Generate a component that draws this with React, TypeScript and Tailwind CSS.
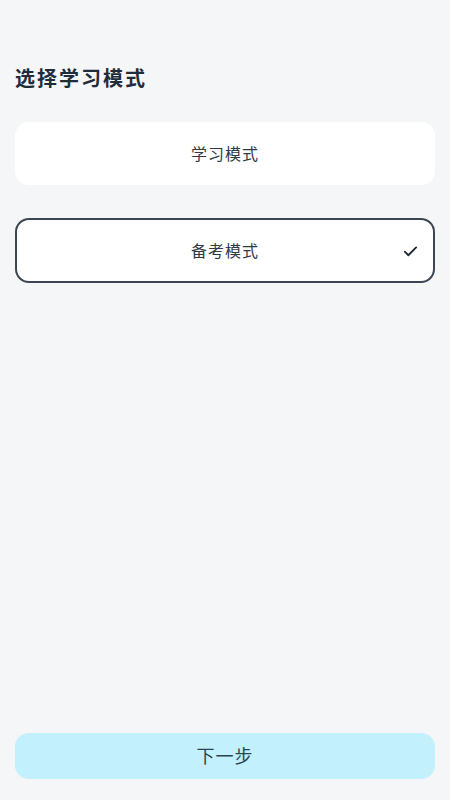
import React, { useState } from "react";

export default function App() {
  const [sel, setSel] = useState(1);
  const modes = ["学习模式", "备考模式"];
  return (
    <div
      className="h-[800px] w-full bg-[#f4f6f8] flex flex-col px-[15px]"
      style={{ fontFamily: '"Noto Sans", "Noto Sans CJK SC", sans-serif' }}
    >
      <h1 className="pt-[65px] text-[20px] leading-[28px] tracking-[2px] font-bold text-[#1f2d3a]">选择学习模式</h1>
      <div className="mt-[29px] flex flex-col gap-[33px]">
        {modes.map((m, i) => (
          <button
            key={m}
            onClick={() => setSel(i)}
            className={
              i === sel
                ? "relative h-[65px] rounded-[14px] border-2 border-[#3b4652] bg-white flex items-center justify-center text-[16px] tracking-[1px] text-[#2f3a45]"
                : "relative h-[63px] rounded-[14px] bg-white flex items-center justify-center text-[16px] tracking-[1px] text-[#2f3a45]"
            }
          >
            {m}
            {i === sel && (
              <svg
                className="absolute right-[14px] top-1/2 -translate-y-1/2"
                width="17"
                height="17"
                viewBox="0 0 24 24"
                fill="none"
                stroke="#1f2a37"
                strokeWidth="2.6"
                strokeLinecap="round"
                strokeLinejoin="round"
              >
                <path d="M4 13l5 5L20 7" />
              </svg>
            )}
          </button>
        ))}
      </div>
      <div className="flex-1" />
      <button className="mb-[21px] h-[46px] rounded-[14px] bg-[#c2f0fc] text-[18px] tracking-[1px] text-[#2b4450] flex items-center justify-center">
        下一步
      </button>
    </div>
  );
}
